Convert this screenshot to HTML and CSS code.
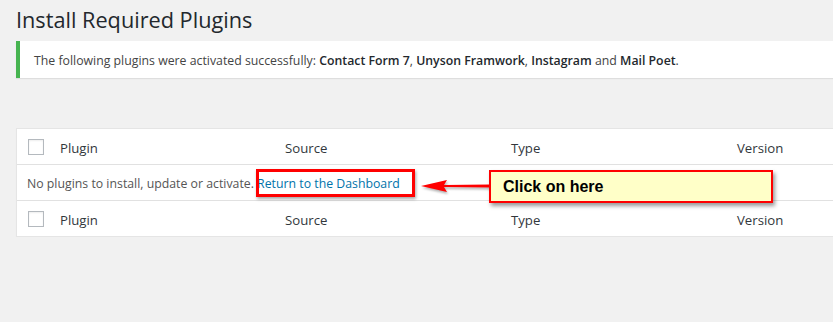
FILE: index.html
```html
<!DOCTYPE html>
<html>

<head>
    <title>Install Required Plugins</title>
    <link rel="stylesheet" href="styles.css">
</head>

<body>
    <div class="wrap">
        <h1>Install Required Plugins</h1>

        <div class="notice">
            <p>The following plugins were activated successfully: <strong>Contact Form 7</strong>, <strong>Unyson Framwork</strong>, <strong>Instagram</strong> and <strong>Mail Poet</strong>.</p>
        </div>

        <div class="plugins">
            <div class="row head">
                <div class="cell check"><span class="box"></span></div>
                <div class="cell">Plugin</div>
                <div class="cell">Source</div>
                <div class="cell">Type</div>
                <div class="cell">Version</div>
            </div>
            <div class="row empty">
                <div class="cell">No plugins to install, update or activate. <a href="#">Return to the Dashboard</a></div>
            </div>
            <div class="row head">
                <div class="cell check"><span class="box"></span></div>
                <div class="cell">Plugin</div>
                <div class="cell">Source</div>
                <div class="cell">Type</div>
                <div class="cell">Version</div>
            </div>

            <div class="mark"></div>
            <svg class="arrow" width="70" height="16" viewBox="0 0 70 16">
                <polygon points="1,8 27,2 24,7 70,6.5 70,9.5 24,9 27,14" fill="#ff0000" />
            </svg>
            <div class="callout">Click on here</div>
        </div>
    </div>
</body>

</html>
```

FILE: styles.css
```css
body {
    margin: 0;
    background-color: #f1f1f1;
    font-family: "Open Sans", "Noto Sans", sans-serif;
    font-size: 12.3px;
    color: #444;
    overflow: hidden;
}

.wrap {
    width: 900px;
    padding-left: 16px;
}

h1 {
    margin: 0;
    padding-top: 5px;
    font-size: 21.7px;
    font-weight: 400;
    line-height: 29px;
    color: #23282d;
}

.notice {
    margin-top: 7px;
    background-color: #fff;
    border-left: 4px solid #46b450;
    box-shadow: 0 1px 1px rgba(0, 0, 0, 0.08);
    padding: 0 14px;
}

.notice p {
    margin: 0;
    padding: 10px 0 7px;
    line-height: 20px;
    color: #444;
}

.notice strong {
    font-weight: 600;
    color: #23282d;
}

.plugins {
    position: relative;
    margin-top: 50px;
    background-color: #fff;
    border: 1px solid #e5e5e5;
    box-shadow: 0 1px 1px rgba(0, 0, 0, 0.04);
}

.row {
    display: grid;
    grid-template-columns: 33px 225px 226px 226px 1fr;
    height: 35px;
    align-items: center;
}

.row + .row {
    border-top: 1px solid #e1e1e1;
}

.row.head .cell {
    font-size: 13.2px;
    color: #32373c;
    padding-left: 10px;
    padding-top: 2px;
}

.row.head .cell.check {
    padding-left: 11px;
    padding-top: 0;
    display: flex;
}

.box {
    width: 14px;
    height: 14px;
    border: 1px solid #b4b9be;
    background-color: #fff;
    box-shadow: inset 0 1px 2px rgba(0, 0, 0, 0.07);
}

.row.empty {
    display: flex;
}

.row.empty .cell {
    padding-left: 10px;
    padding-top: 2px;
    color: #555;
}

.row.empty a {
    color: #0073aa;
    text-decoration: none;
}

.mark {
    position: absolute;
    left: 239px;
    top: 40px;
    width: 153px;
    height: 22px;
    border: 3px solid #ff0000;
    box-shadow: 1px 2px 3px rgba(0, 0, 0, 0.35);
}

.arrow {
    position: absolute;
    left: 403px;
    top: 49px;
    filter: drop-shadow(1px 2px 1px rgba(0, 0, 0, 0.3));
}

.callout {
    position: absolute;
    left: 472px;
    top: 41px;
    width: 268px;
    height: 29px;
    padding-left: 12px;
    background-color: #ffffc8;
    border: 2px solid #ff0000;
    box-shadow: 2px 3px 4px rgba(0, 0, 0, 0.4);
    font-family: "Liberation Sans", Arial, sans-serif;
    font-weight: 700;
    font-size: 16px;
    line-height: 29px;
    color: #000;
}
```
